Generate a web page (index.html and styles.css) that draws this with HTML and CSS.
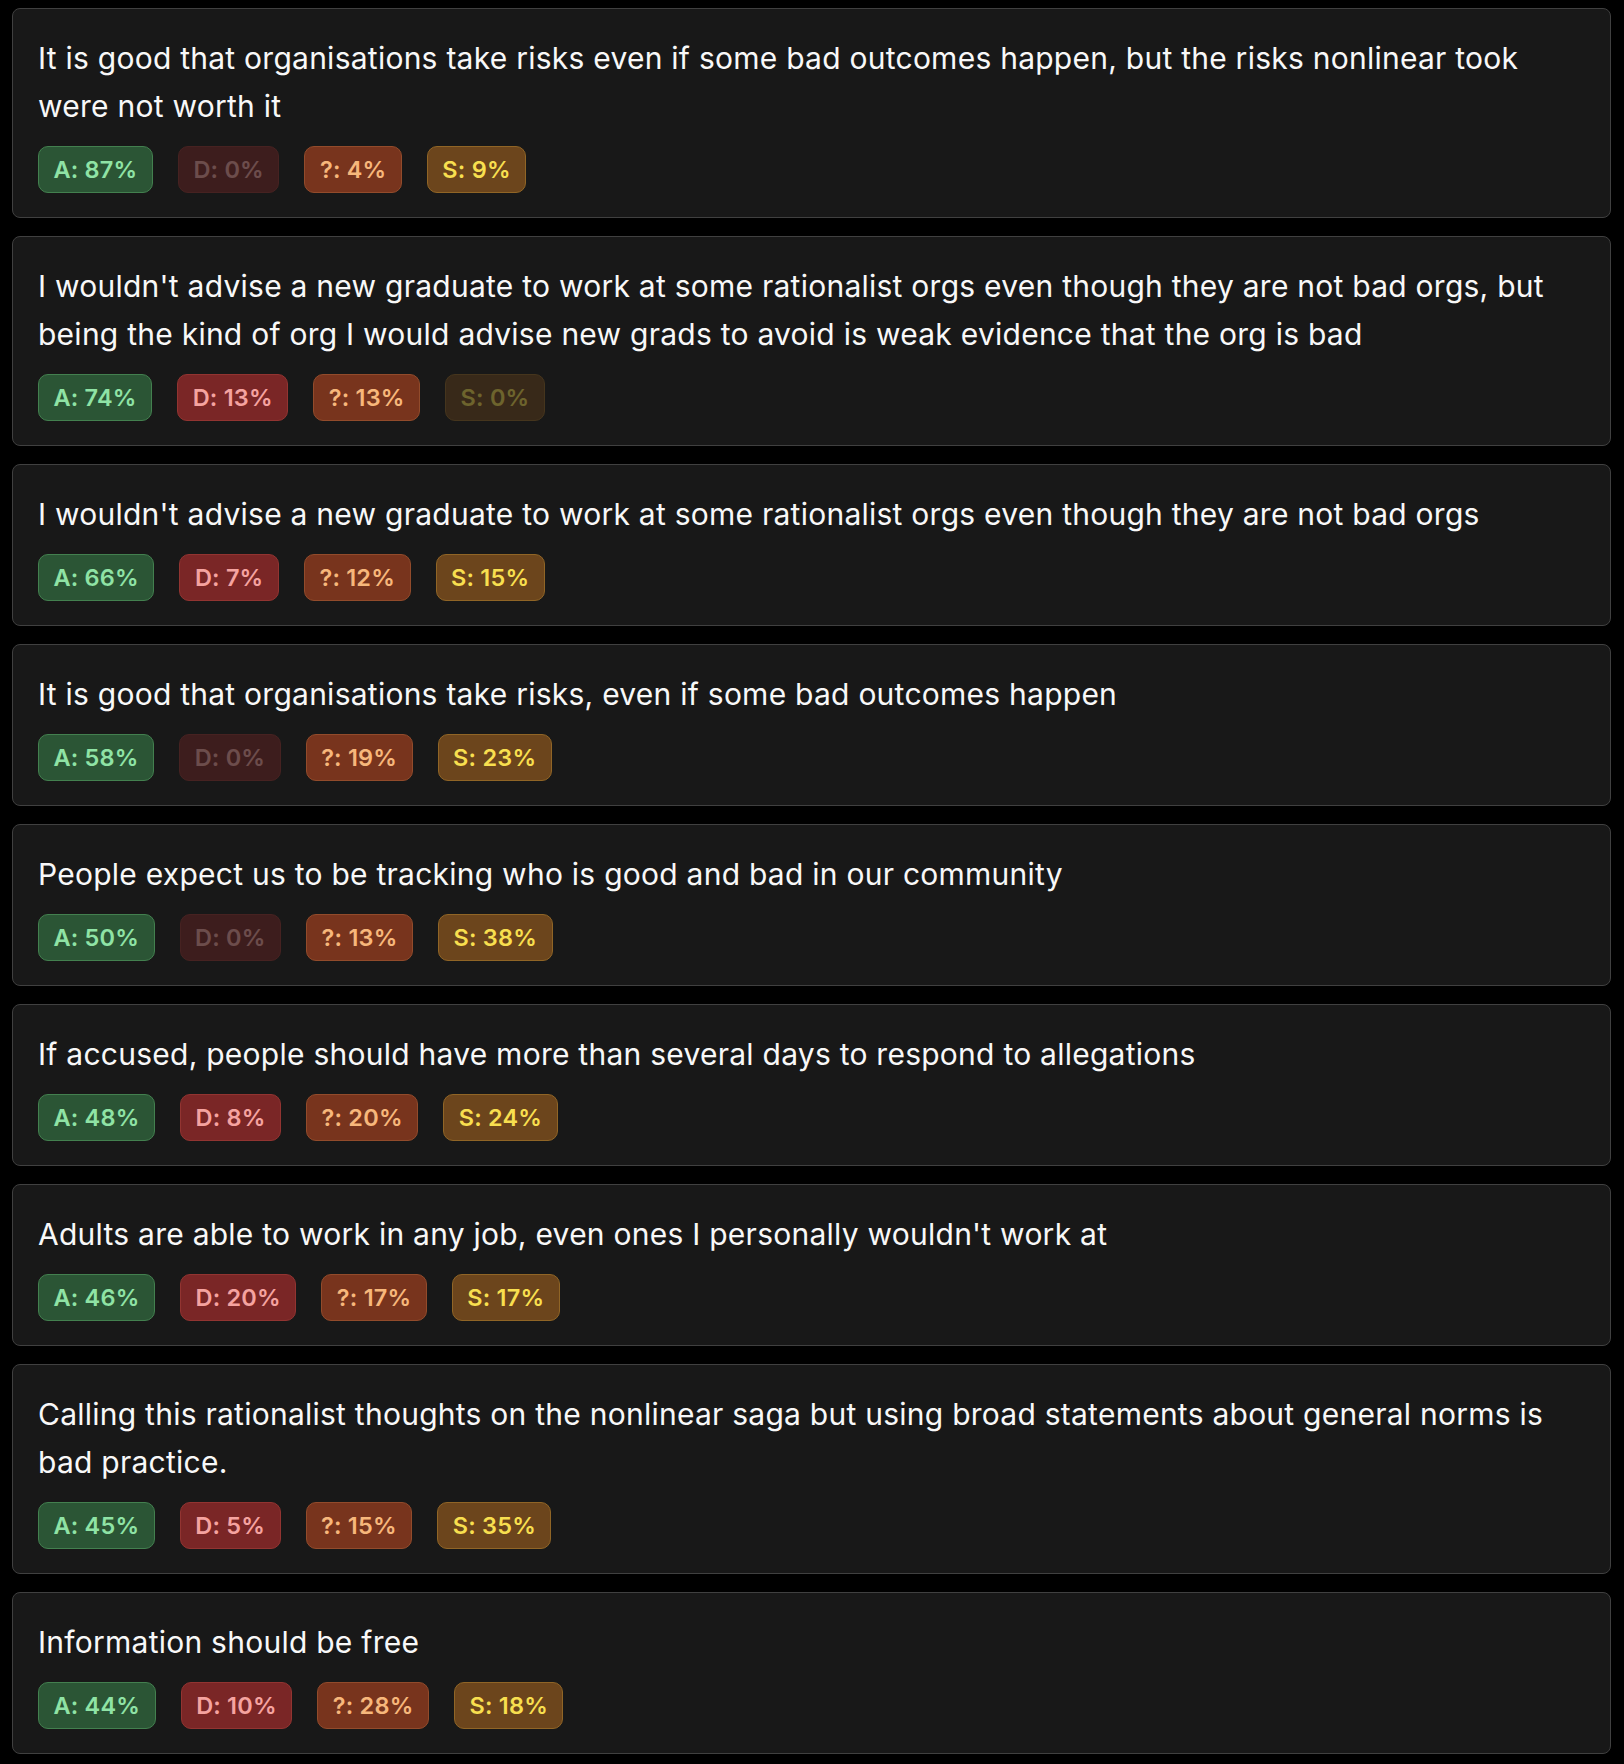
FILE: index.html
```html
<!DOCTYPE html>
<html lang="en">
<head>
<meta charset="utf-8">
<title>Statements</title>
<link rel="stylesheet" href="styles.css">
</head>
<body>
<main class="list">
  <section class="card">
    <p class="statement">It is good that organisations take risks even if some bad outcomes happen, but the risks nonlinear took were not worth it</p>
    <div class="badges">
      <span class="badge agree">A: 87%</span>
      <span class="badge disagree zero">D: 0%</span>
      <span class="badge unsure">?: 4%</span>
      <span class="badge skip">S: 9%</span>
    </div>
  </section>
  <section class="card">
    <p class="statement">I wouldn't advise a new graduate to work at some rationalist orgs even though they are not bad orgs, but being the kind of org I would advise new grads to avoid is weak evidence that the org is bad</p>
    <div class="badges">
      <span class="badge agree">A: 74%</span>
      <span class="badge disagree">D: 13%</span>
      <span class="badge unsure">?: 13%</span>
      <span class="badge skip zero">S: 0%</span>
    </div>
  </section>
  <section class="card">
    <p class="statement">I wouldn't advise a new graduate to work at some rationalist orgs even though they are not bad orgs</p>
    <div class="badges">
      <span class="badge agree">A: 66%</span>
      <span class="badge disagree">D: 7%</span>
      <span class="badge unsure">?: 12%</span>
      <span class="badge skip">S: 15%</span>
    </div>
  </section>
  <section class="card">
    <p class="statement">It is good that organisations take risks, even if some bad outcomes happen</p>
    <div class="badges">
      <span class="badge agree">A: 58%</span>
      <span class="badge disagree zero">D: 0%</span>
      <span class="badge unsure">?: 19%</span>
      <span class="badge skip">S: 23%</span>
    </div>
  </section>
  <section class="card">
    <p class="statement">People expect us to be tracking who is good and bad in our community</p>
    <div class="badges">
      <span class="badge agree">A: 50%</span>
      <span class="badge disagree zero">D: 0%</span>
      <span class="badge unsure">?: 13%</span>
      <span class="badge skip">S: 38%</span>
    </div>
  </section>
  <section class="card">
    <p class="statement">If accused, people should have more than several days to respond to allegations</p>
    <div class="badges">
      <span class="badge agree">A: 48%</span>
      <span class="badge disagree">D: 8%</span>
      <span class="badge unsure">?: 20%</span>
      <span class="badge skip">S: 24%</span>
    </div>
  </section>
  <section class="card">
    <p class="statement">Adults are able to work in any job, even ones I personally wouldn't work at</p>
    <div class="badges">
      <span class="badge agree">A: 46%</span>
      <span class="badge disagree">D: 20%</span>
      <span class="badge unsure">?: 17%</span>
      <span class="badge skip">S: 17%</span>
    </div>
  </section>
  <section class="card">
    <p class="statement">Calling this rationalist thoughts on the nonlinear saga but using broad statements about general norms is bad practice.</p>
    <div class="badges">
      <span class="badge agree">A: 45%</span>
      <span class="badge disagree">D: 5%</span>
      <span class="badge unsure">?: 15%</span>
      <span class="badge skip">S: 35%</span>
    </div>
  </section>
  <section class="card">
    <p class="statement">Information should be free</p>
    <div class="badges">
      <span class="badge agree">A: 44%</span>
      <span class="badge disagree">D: 10%</span>
      <span class="badge unsure">?: 28%</span>
      <span class="badge skip">S: 18%</span>
    </div>
  </section>
</main>
</body>
</html>
```

FILE: styles.css
```css
html, body {
  margin: 0;
  padding: 0;
  background: #000000;
}

body {
  font-family: Inter, "Noto Sans", "Liberation Sans", sans-serif;
  color: #ffffff;
}

.list {
  display: flex;
  flex-direction: column;
  gap: 18px;
  padding: 8px 13px 11px 12px;
}

.card {
  background: #181818;
  border: 1px solid #404040;
  border-radius: 8px;
  padding: 25px 25px 24px;
}

.statement {
  margin: 0 0 16px;
  font-size: 30px;
  line-height: 48px;
  letter-spacing: 0.25px;
  font-weight: 400;
  color: #f8f8f8;
}

.badges {
  display: flex;
  gap: 25px;
}

.badge {
  box-sizing: border-box;
  height: 47px;
  display: inline-flex;
  align-items: center;
  padding: 0 14.5px;
  border-radius: 10px;
  border: 1px solid transparent;
  font-size: 23.5px;
  letter-spacing: 0.2px;
  font-weight: 600;
}

.agree {
  background: #2b5535;
  border-color: #43804f;
  color: #8fe3a5;
}

.disagree {
  background: #7a2626;
  border-color: #923431;
  color: #f5a3a0;
}

.unsure {
  background: #78341d;
  border-color: #924b2b;
  color: #f7b77b;
}

.skip {
  background: #6c451c;
  border-color: #906526;
  color: #f8df4f;
}

.zero {
  opacity: 0.38;
}
```
